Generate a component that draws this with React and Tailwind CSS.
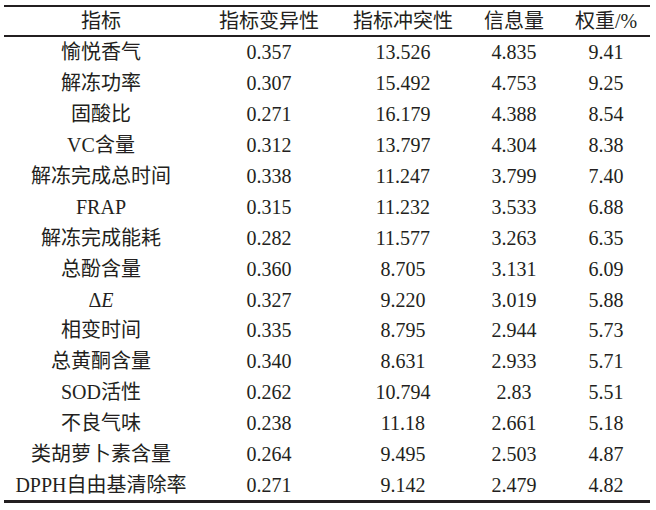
import React from "react";

const rows = [
  ["愉悦香气", "0.357", "13.526", "4.835", "9.41"],
  ["解冻功率", "0.307", "15.492", "4.753", "9.25"],
  ["固酸比", "0.271", "16.179", "4.388", "8.54"],
  ["VC含量", "0.312", "13.797", "4.304", "8.38"],
  ["解冻完成总时间", "0.338", "11.247", "3.799", "7.40"],
  ["FRAP", "0.315", "11.232", "3.533", "6.88"],
  ["解冻完成能耗", "0.282", "11.577", "3.263", "6.35"],
  ["总酚含量", "0.360", "8.705", "3.131", "6.09"],
  ["ΔE", "0.327", "9.220", "3.019", "5.88"],
  ["相变时间", "0.335", "8.795", "2.944", "5.73"],
  ["总黄酮含量", "0.340", "8.631", "2.933", "5.71"],
  ["SOD活性", "0.262", "10.794", "2.83", "5.51"],
  ["不良气味", "0.238", "11.18", "2.661", "5.18"],
  ["类胡萝卜素含量", "0.264", "9.495", "2.503", "4.87"],
  ["DPPH自由基清除率", "0.271", "9.142", "2.479", "4.82"],
];

const headers = ["指标", "指标变异性", "指标冲突性", "信息量", "权重/%"];

const cols = "grid grid-cols-[194px_142px_126px_96px_88px]";

function Name({ text }) {
  if (text === "ΔE") {
    return (
      <span>
        Δ<span className="italic">E</span>
      </span>
    );
  }
  return <span>{text}</span>;
}

export default function App() {
  return (
    <div
      className="w-[656px] h-[510px] bg-white pt-[5px] pl-[4px] text-[#231f20] text-[20px] leading-none"
      style={{ fontFamily: '"Liberation Serif", "Noto Sans CJK SC", serif' }}
    >
      <div className="w-[646px] border-t-2 border-b-[3px] border-[#231f20]">
        <div className={`${cols} h-[30px] border-b-2 border-[#231f20]`}>
          {headers.map((h) => (
            <div key={h} className="flex items-center justify-center">
              {h}
            </div>
          ))}
        </div>
        {rows.map((r) => (
          <div key={r[0]} className={`${cols} h-[30.9px]`}>
            <div className="flex items-center justify-center">
              <Name text={r[0]} />
            </div>
            {r.slice(1).map((v, i) => (
              <div key={i} className="flex items-center justify-center">
                {v}
              </div>
            ))}
          </div>
        ))}
      </div>
    </div>
  );
}
